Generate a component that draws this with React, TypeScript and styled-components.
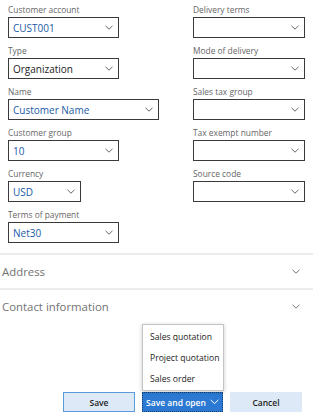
import styled, { createGlobalStyle } from 'styled-components';

const GlobalStyle = createGlobalStyle`
  html, body {
    margin: 0;
    padding: 0;
    background: #ffffff;
  }
  body {
    font-family: 'Open Sans', 'Noto Sans', sans-serif;
    width: 313px;
    height: 419px;
    overflow: hidden;
  }
`;

const Page = styled.div`
  width: 313px;
  height: 419px;
  display: flex;
  flex-direction: column;
`;

const FieldGrid = styled.div`
  display: grid;
  grid-template-columns: 185px 1fr;
  padding: 4px 0 0 8px;
  height: 253px;
  box-sizing: border-box;
`;

const Column = styled.div`
  display: flex;
  flex-direction: column;
`;

const Field = styled.div`
  display: flex;
  flex-direction: column;
  margin-bottom: 7px;
`;

const Label = styled.div`
  font-size: 8.4px;
  line-height: 12px;
  height: 12px;
  margin-bottom: 1px;
  color: #666666;
  white-space: nowrap;
`;

const Box = styled.div<{ $width: number }>`
  width: ${(p) => p.$width}px;
  height: 21px;
  box-sizing: border-box;
  border: 1px solid #3a3a3a;
  display: flex;
  align-items: center;
  justify-content: space-between;
  padding: 0 5px 0 4px;
`;

const Value = styled.span<{ $plain?: boolean }>`
  font-size: 10px;
  color: ${(p) => (p.$plain ? '#1c1c1c' : '#1a5aa6')};
  white-space: nowrap;
`;

const Section = styled.div`
  height: 35px;
  box-sizing: border-box;
  border-top: 2px solid #ececec;
  display: flex;
  align-items: center;
  justify-content: space-between;
  padding: 0 13px 0 2px;
  font-size: 11.4px;
  color: #727272;
`;

const Footer = styled.div`
  margin-top: 69px;
  display: flex;
  justify-content: flex-end;
  gap: 7px;
  padding-right: 11px;
`;

const Button = styled.div<{ $variant: 'default' | 'primary' | 'plain' }>`
  position: relative;
  height: 20px;
  box-sizing: border-box;
  display: flex;
  align-items: center;
  justify-content: center;
  gap: 4px;
  font-size: 8.5px;
  font-weight: 600;
  width: ${(p) => (p.$variant === 'primary' ? 81 : 72)}px;
  background: ${(p) => (p.$variant === 'primary' ? '#2b79d2' : '#dde9f6')};
  color: ${(p) => (p.$variant === 'primary' ? '#ffffff' : '#1e1e1e')};
  border: ${(p) =>
    p.$variant === 'default'
      ? '1px solid #5a9ad8'
      : p.$variant === 'primary'
        ? '1px dotted #17406f'
        : '1px solid #dde9f6'};
`;

const Menu = styled.div`
  position: absolute;
  left: -1px;
  bottom: 20px;
  width: 82px;
  background: #ffffff;
  border: 1px solid #c4c4c4;
  box-shadow: 0 1px 4px rgba(0, 0, 0, 0.22);
  padding: 2px 0 0;
  box-sizing: border-box;
`;

const MenuItem = styled.div`
  height: 21px;
  line-height: 21px;
  padding-left: 7px;
  font-size: 8.6px;
  font-weight: 400;
  color: #222222;
  white-space: nowrap;
`;

const Chevron = ({ color = '#555', size = 8 }: { color?: string; size?: number }) => (
  <svg width={size} height={size / 2 + 1} viewBox="0 0 8 5" fill="none">
    <polyline points="0.5,0.8 4,4.2 7.5,0.8" stroke={color} strokeWidth="0.9" />
  </svg>
);

type FieldDef = { label: string; value?: string; width: number; plain?: boolean };

const leftFields: FieldDef[] = [
  { label: 'Customer account', value: 'CUST001', width: 111 },
  { label: 'Type', value: 'Organization', width: 111, plain: true },
  { label: 'Name', value: 'Customer Name', width: 151 },
  { label: 'Customer group', value: '10', width: 111 },
  { label: 'Currency', value: 'USD', width: 73 },
  { label: 'Terms of payment', value: 'Net30', width: 111 },
];

const rightFields: FieldDef[] = [
  { label: 'Delivery terms', width: 112 },
  { label: 'Mode of delivery', width: 112 },
  { label: 'Sales tax group', width: 112 },
  { label: 'Tax exempt number', width: 112 },
  { label: 'Source code', width: 112 },
];

const renderField = (f: FieldDef) => (
  <Field key={f.label}>
    <Label>{f.label}</Label>
    <Box $width={f.width}>
      <Value $plain={f.plain}>{f.value ?? ''}</Value>
      <Chevron />
    </Box>
  </Field>
);

const App = () => (
  <Page>
    <GlobalStyle />
    <FieldGrid>
      <Column>{leftFields.map(renderField)}</Column>
      <Column>{rightFields.map(renderField)}</Column>
    </FieldGrid>
    <Section>
      <span>Address</span>
      <Chevron color="#666" />
    </Section>
    <Section>
      <span>Contact information</span>
      <Chevron color="#666" />
    </Section>
    <Footer>
      <Button $variant="default">Save</Button>
      <Button $variant="primary">
        Save and open
        <Chevron color="#ffffff" size={9} />
        <Menu>
          <MenuItem>Sales quotation</MenuItem>
          <MenuItem>Project quotation</MenuItem>
          <MenuItem>Sales order</MenuItem>
        </Menu>
      </Button>
      <Button $variant="plain">Cancel</Button>
    </Footer>
  </Page>
);

export default App;
